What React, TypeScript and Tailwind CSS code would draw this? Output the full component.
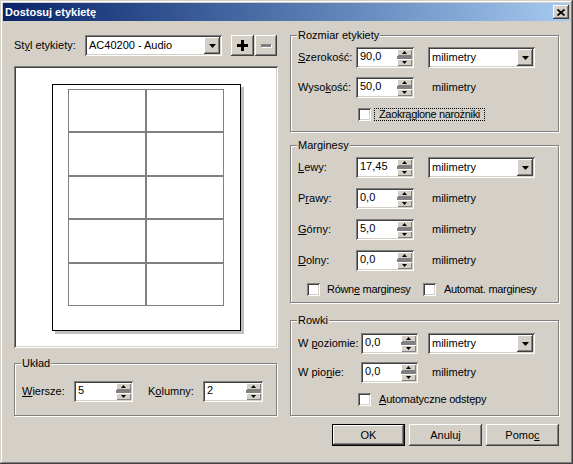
import React from 'react';

const raised =
  'bg-[#d4d0c8] shadow-[inset_-1px_-1px_#404040,inset_1px_1px_#ffffff,inset_-2px_-2px_#808080,inset_2px_2px_#d4d0c8]';
const sunken =
  'bg-white shadow-[inset_1px_1px_#808080,inset_-1px_-1px_#ffffff,inset_2px_2px_#404040,inset_-2px_-2px_#d4d0c8]';
const smallRaised = 'bg-[#d4d0c8] shadow-[inset_1px_1px_#ffffff,inset_-1px_-1px_#808080]';

function DownArrow() {
  return (
    <svg width="7" height="4" viewBox="0 0 7 4">
      <path d="M0 0h7L3.5 4z" fill="#000" />
    </svg>
  );
}

function Spin({ value, className }: { value: string; className: string }) {
  return (
    <div className={`flex h-[21px] p-[2px] ${sunken} ${className}`}>
      <div className="flex-1 pl-[2px] leading-[15px]">{value}</div>
      <div className="flex w-[15px] flex-col">
        <div className={`flex h-[7px] items-center justify-center ${smallRaised}`}>
          <svg width="5" height="3" viewBox="0 0 5 3">
            <path d="M2.5 0L5 3H0z" fill="#000" />
          </svg>
        </div>
        <div className="h-[3px] bg-[#808080]" />
        <div className={`flex h-[7px] items-center justify-center ${smallRaised}`}>
          <svg width="5" height="3" viewBox="0 0 5 3">
            <path d="M0 0h5L2.5 3z" fill="#000" />
          </svg>
        </div>
      </div>
    </div>
  );
}

function Combo({ value, className }: { value: string; className: string }) {
  return (
    <div className={`flex h-[21px] p-[2px] ${sunken} ${className}`}>
      <div className="flex-1 pl-[2px] leading-[16px]">{value}</div>
      <div className={`flex w-[16px] items-center justify-center ${raised}`}>
        <DownArrow />
      </div>
    </div>
  );
}

function Check() {
  return <div className={`h-[13px] w-[13px] shrink-0 ${sunken}`} />;
}

function Group({
  title,
  className,
  children,
}: {
  title: React.ReactNode;
  className: string;
  children: React.ReactNode;
}) {
  return (
    <div
      className={`relative flex flex-col border border-[#808080] shadow-[1px_1px_0_#ffffff,inset_1px_1px_0_#ffffff] ${className}`}
    >
      <span className="absolute -top-[7px] left-[6px] bg-[#d4d0c8] px-[1px] leading-[13px]">{title}</span>
      {children}
    </div>
  );
}

export default function App() {
  const cells = Array.from({ length: 10 });

  return (
    <div className="h-[464px] w-[573px] bg-[#d4d0c8] p-[3px] font-['Liberation_Sans',Arial,sans-serif] text-[11px] leading-[13px] text-black shadow-[inset_-1px_-1px_#404040,inset_1px_1px_#d4d0c8,inset_-2px_-2px_#808080,inset_2px_2px_#ffffff]">
      {/* Title bar */}
      <div className="flex h-[18px] items-center justify-between bg-gradient-to-r from-[#0a246a] to-[#a6caf0] pl-[2px] pr-[1px]">
        <span className="text-[11px] font-bold text-white">Dostosuj etykietę</span>
        <div className={`flex h-[14px] w-[16px] items-center justify-center ${raised}`}>
          <svg width="8" height="7" viewBox="0 0 8 7">
            <path d="M0.5 0.5L7.5 6.5M7.5 0.5L0.5 6.5" stroke="#000" strokeWidth="1.7" />
          </svg>
        </div>
      </div>

      <div className="flex gap-[12px] pl-[11px] pt-[14px]">
        {/* Left column */}
        <div className="flex w-[264px] flex-col">
          <div className="flex h-[21px] items-center">
            <span className="w-[71px]">
              St<u>y</u>l etykiety:
            </span>
            <Combo value="AC40200 - Audio" className="w-[137px]" />
            <div className={`ml-[9px] flex h-[21px] w-[23px] items-center justify-center ${raised}`}>
              <svg width="11" height="11" viewBox="0 0 11 11">
                <path d="M4 0h3v4h4v3H7v4H4V7H0V4h4z" fill="#000" />
              </svg>
            </div>
            <div className={`ml-[1px] flex h-[21px] w-[22px] items-center justify-center ${raised}`}>
              <svg width="11" height="4" viewBox="0 0 11 4">
                <path d="M1 1h10v3H1z" fill="#ffffff" />
                <path d="M0 0h10v3H0z" fill="#808080" />
              </svg>
            </div>
          </div>

          <div className={`mt-[10px] flex h-[282px] w-[264px] items-center justify-center ${sunken}`}>
            <div className="h-[247px] w-[189px] border border-black bg-white pl-[15px] pt-[4px] shadow-[3px_3px_0_#c0c0c0]">
              <div className="grid h-[218px] w-[156px] grid-cols-2 grid-rows-5">
                {cells.map((_, i) => (
                  <div key={i} className="border border-[#808080]" />
                ))}
              </div>
            </div>
          </div>

          <Group title="Układ" className="mt-[15px] h-[53px] w-[263px] pl-[7px] pt-[17px]">
            <div className="flex h-[21px] items-center">
              <span className="w-[52px]">
                <u>W</u>iersze:
              </span>
              <Spin value="5" className="w-[59px]" />
              <span className="ml-[15px] w-[55px]">
                K<u>o</u>lumny:
              </span>
              <Spin value="2" className="w-[60px]" />
            </div>
          </Group>
        </div>

        {/* Right column */}
        <div className="flex w-[269px] flex-col">
          <Group title="Rozmiar etykiety" className="h-[97px] pl-[7px] pt-[11px]">
            <div className="flex h-[21px] items-center">
              <span className="w-[58px]">
                <u>S</u>zerokość:
              </span>
              <Spin value="90,0" className="w-[58px]" />
              <Combo value="milimetry" className="ml-[14px] w-[107px]" />
            </div>
            <div className="mt-[9px] flex h-[21px] items-center">
              <span className="w-[58px]">
                Wyso<u>k</u>ość:
              </span>
              <Spin value="50,0" className="w-[58px]" />
              <span className="ml-[18px]">milimetry</span>
            </div>
            <div className="mt-[10px] flex h-[13px] items-center pl-[60px]">
              <Check />
              <span className="ml-[3px] border border-dotted border-black px-[4px] leading-[11px] tracking-[-0.35px]">
                Zaokrąglone narożniki
              </span>
            </div>
          </Group>

          <Group title="Marginesy" className="mt-[13px] h-[158px] pl-[7px] pt-[11px]">
            <div className="flex flex-col gap-[10px]">
              <div className="flex h-[21px] items-center">
                <span className="w-[58px]">
                  <u>L</u>ewy:
                </span>
                <Spin value="17,45" className="w-[58px]" />
                <Combo value="milimetry" className="ml-[14px] w-[107px]" />
              </div>
              <div className="flex h-[21px] items-center">
                <span className="w-[58px]">
                  P<u>r</u>awy:
                </span>
                <Spin value="0,0" className="w-[58px]" />
                <span className="ml-[18px]">milimetry</span>
              </div>
              <div className="flex h-[21px] items-center">
                <span className="w-[58px]">
                  <u>G</u>órny:
                </span>
                <Spin value="5,0" className="w-[58px]" />
                <span className="ml-[18px]">milimetry</span>
              </div>
              <div className="flex h-[21px] items-center">
                <span className="w-[58px]">
                  <u>D</u>olny:
                </span>
                <Spin value="0,0" className="w-[58px]" />
                <span className="ml-[18px]">milimetry</span>
              </div>
            </div>
            <div className="mt-[12px] flex h-[13px] items-center pl-[9px]">
              <Check />
              <span className="ml-[7px] w-[96px] tracking-[-0.3px]">
                Równ<u>e</u> marginesy
              </span>
              <Check />
              <span className="ml-[8px] tracking-[-0.3px]">
                Automat. mar<u>g</u>inesy
              </span>
            </div>
          </Group>

          <Group title="Rowki" className="mt-[17px] h-[96px] pl-[7px] pt-[12px]">
            <div className="flex h-[21px] items-center">
              <span className="w-[63px]">
                W <u>p</u>oziomie:
              </span>
              <Spin value="0,0" className="w-[57px]" />
              <Combo value="milimetry" className="ml-[10px] w-[107px]" />
            </div>
            <div className="mt-[8px] flex h-[21px] items-center">
              <span className="w-[63px]">
                W pio<u>n</u>ie:
              </span>
              <Spin value="0,0" className="w-[57px]" />
              <span className="ml-[14px]">milimetry</span>
            </div>
            <div className="mt-[10px] flex h-[13px] items-center pl-[60px]">
              <Check />
              <span className="ml-[8px] tracking-[-0.2px]">
                <u>A</u>utomatyczne odstępy
              </span>
            </div>
          </Group>

          <div className="mt-[8px] flex gap-[4px] pl-[42px]">
            <div className="flex h-[22px] w-[74px] items-center justify-center border border-black">
              <div className={`flex h-full w-full items-center justify-center ${raised}`}>OK</div>
            </div>
            <div className={`flex h-[22px] w-[74px] items-center justify-center ${raised}`}>Anuluj</div>
            <div className={`flex h-[22px] w-[74px] items-center justify-center ${raised}`}>
              Pomo<u>c</u>
            </div>
          </div>
        </div>
      </div>
    </div>
  );
}
